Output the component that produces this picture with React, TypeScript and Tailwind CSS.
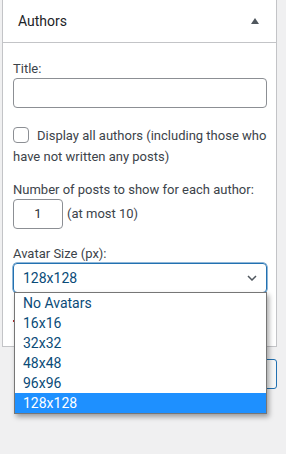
const options = ["No Avatars", "16x16", "32x32", "48x48", "96x96", "128x128"];

export default function App() {
  const selected = "128x128";
  return (
    <div className="relative min-h-[454px] bg-[#f0f0f1] font-['Roboto',sans-serif] text-[13px] text-[#3c434a]">
      {/* widget panel */}
      <div className="ml-[2px] w-[275px] border-x border-b border-[#c3c4c7] bg-white">
        <div className="flex h-[43px] items-center justify-between border-b border-[#c3c4c7] pl-[15px] pr-[17px] text-[14px] text-[#1d2327]">
          <span>Authors</span>
          <svg width="8" height="6" viewBox="0 0 8 6" className="mb-[1px]">
            <polygon points="4,0 8,6 0,6" fill="#50575e" />
          </svg>
        </div>

        <div className="pl-[10px] pr-[9px] pt-[17px] pb-[10px]">
          <label className="block leading-[18px]">Title:</label>
          <div className="h-[30px] w-[254px] rounded-[4px] border border-[#8c8f94] bg-white" />

          <p className="mt-[16px] leading-[21px]">
            <span className="mr-[8px] inline-block h-[16px] w-[16px] translate-y-[3px] rounded-[4px] border border-[#8c8f94] bg-white" />
            Display all authors (including those who have not written any posts)
          </p>

          <label className="mt-[14px] block leading-[18px]">
            Number of posts to show for each author:
          </label>
          <div className="flex items-center gap-[4px]">
            <div className="flex h-[30px] w-[50px] items-center justify-center rounded-[4px] border border-[#8c8f94] text-[#2c3338]">
              1
            </div>
            <span>(at most 10)</span>
          </div>

          <label className="mt-[16px] block leading-[18px]">Avatar Size (px):</label>
          <div className="flex h-[30px] w-[254px] items-center justify-between rounded-[4px] border border-[#2271b1] pl-[9px] pr-[9px] text-[14px] text-[#0a4b78] shadow-[0_0_0_0.5px_#2271b1]">
            <span>{selected}</span>
            <svg width="10" height="6" viewBox="0 0 10 6">
              <path d="M1 1l4 4 4-4" fill="none" stroke="#50575e" strokeWidth="1.5" />
            </svg>
          </div>

          {/* tail of the delete link, the rest is under the open list */}
          <div className="h-[43px] pt-[27px]">
            <span className="block h-[2px] w-[1px] bg-[#b32d2e]" />
          </div>
        </div>
      </div>

      <div className="ml-[100px] mt-[12px] h-[30px] w-[177px] rounded-[3px] border border-[#2271b1] bg-[#f6f7f7]" />

      {/* open select list */}
      <ul className="absolute left-[14px] top-[292px] w-[253px] border border-[#767676] bg-white text-[14px] text-[#0a4b78] shadow-[2px_3px_5px_rgba(0,0,0,0.35)]">
        {options.map((o) => (
          <li
            key={o}
            className={`h-[20px] pl-[8px] leading-[20px] ${o === selected ? "bg-[#1e90ff] text-white" : ""}`}
          >
            {o}
          </li>
        ))}
      </ul>
    </div>
  );
}
